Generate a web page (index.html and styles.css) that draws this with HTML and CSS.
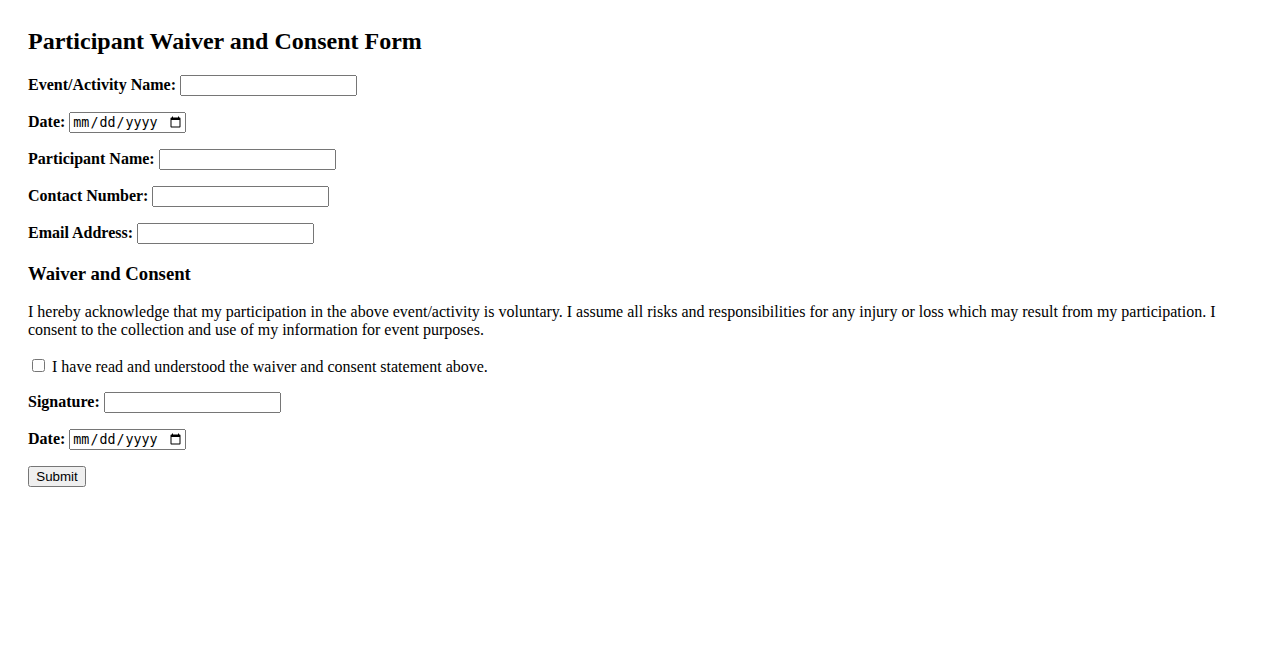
FILE: index.html
```html
<!DOCTYPE html>
<html lang="en">
<head>
    <meta charset="UTF-8">
    <meta name="viewport" content="width=device-width, initial-scale=1.0">
    <title>Participant Waiver and Consent Form</title>
    <link rel="stylesheet" href="styles.css">
</head>
<body>
    <h2>Participant Waiver and Consent Form</h2>
    <form id="waiverForm">
        <div class="form-group">
            <label for="eventName">Event/Activity Name:</label>
            <input type="text" id="eventName" name="eventName">
        </div>
        <div class="form-group">
            <label for="eventDate">Date:</label>
            <input type="date" id="eventDate" name="eventDate">
        </div>
        <div class="form-group">
            <label for="participantName">Participant Name:</label>
            <input type="text" id="participantName" name="participantName">
        </div>
        <div class="form-group">
            <label for="contactNumber">Contact Number:</label>
            <input type="tel" id="contactNumber" name="contactNumber">
        </div>
        <div class="form-group">
            <label for="email">Email Address:</label>
            <input type="email" id="email" name="email">
        </div>

        <h3>Waiver and Consent</h3>
        <p>I hereby acknowledge that my participation in the above event/activity is voluntary. I assume all risks and responsibilities for any injury or loss which may result from my participation. I consent to the collection and use of my information for event purposes.</p>

        <div class="form-group check-group">
            <label class="check-label">
                <input type="checkbox" id="agree" name="agree">
                I have read and understood the waiver and consent statement above.
            </label>
        </div>
        <div class="form-group">
            <label for="signature">Signature:</label>
            <input type="text" id="signature" name="signature">
        </div>
        <div class="form-group">
            <label for="signDate">Date:</label>
            <input type="date" id="signDate" name="signDate">
        </div>
        <button type="submit">Submit</button>
    </form>
</body>
</html>
```

FILE: styles.css
```css
body {
    font-family: "Liberation Serif", "Times New Roman", serif;
    margin: 8px;
    padding: 0 20px;
}
.form-group {
    margin-bottom: 16px;
}
.check-group {
    padding-top: 1px;
}
label {
    font-weight: bold;
}
.check-label {
    font-weight: normal;
}
input[type="text"],
input[type="tel"],
input[type="email"],
input[type="date"] {
    box-sizing: border-box;
    width: 177px;
    height: 21px;
}
input[type="date"] {
    width: 117px;
}
button {
    font-family: "Liberation Sans", Arial, sans-serif;
    height: 21px;
    width: 58px;
}
```
